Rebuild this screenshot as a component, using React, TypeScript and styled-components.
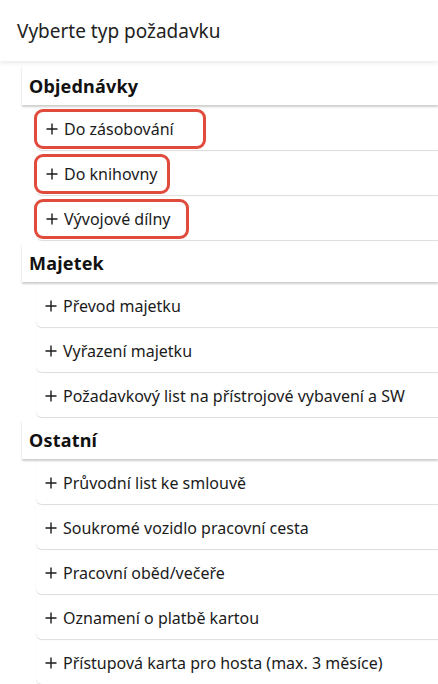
import React from "react";
import styled, { createGlobalStyle } from "styled-components";

const GlobalStyle = createGlobalStyle`
  html, body {
    margin: 0;
    padding: 0;
    background: #ffffff;
  }
  body {
    font-family: "Noto Sans", "Open Sans", Arial, sans-serif;
    color: #1b1b1b;
    overflow: hidden;
  }
`;

const Page = styled.div`
  width: 438px;
  height: 684px;
  overflow: hidden;
  background: #ffffff;
`;

const TopBar = styled.header`
  height: 61px;
  display: flex;
  align-items: center;
  padding-left: 17px;
  font-size: 19px;
  color: #222;
  box-shadow: 0 2px 5px rgba(0, 0, 0, 0.09);
  position: relative;
  z-index: 2;
`;

const List = styled.div`
  display: flex;
  flex-direction: column;
`;

const Section = styled.section<{ first?: boolean }>`
  display: flex;
  flex-direction: column;
  padding-top: ${(p) => (p.first ? "5px" : "3px")};
`;

const SectionTitle = styled.div`
  margin-left: 22px;
  height: 39px;
  display: flex;
  align-items: center;
  padding-left: 7px;
  padding-top: 1px;
  box-sizing: border-box;
  font-size: 18px;
  letter-spacing: 0.2px;
  font-weight: 700;
  color: #111;
  background: #fff;
  box-shadow: 0 2px 2px rgba(0, 0, 0, 0.2);
  position: relative;
  z-index: 1;
`;

const Row = styled.div`
  margin-left: 36px;
  height: 45px;
  box-sizing: border-box;
  display: flex;
  align-items: center;
  padding-top: 2px;
  border-radius: 0 0 0 6px;
  box-shadow: 0 1px 1px rgba(0, 0, 0, 0.14);
`;

const Label = styled.span<{ marked?: boolean; extra?: number }>`
  display: inline-flex;
  align-items: center;
  gap: 6px;
  font-size: 16px;
  color: #1b1b1b;
  white-space: nowrap;
  padding: ${(p) => (p.marked ? "6px" : "5px")}
    ${(p) => (p.marked ? 8 + (p.extra || 0) : 10)}px
    ${(p) => (p.marked ? "6px" : "5px")} 9px;
  margin-left: ${(p) => (p.marked ? "-2px" : "0")};
  border: ${(p) => (p.marked ? "3px solid #e14b3b" : "none")};
  border-radius: 9px;
`;

const Plus = () => (
  <svg width="12" height="12" viewBox="0 0 12 12" fill="none">
    <path d="M6 0.5v11M0.5 6h11" stroke="#1b1b1b" strokeWidth="1.4" />
  </svg>
);

type Item = { text: string; marked?: boolean; extra?: number };

const sections: { title: string; items: Item[] }[] = [
  {
    title: "Objednávky",
    items: [
      { text: "Do zásobování", marked: true, extra: 21 },
      { text: "Do knihovny", marked: true, extra: 1 },
      { text: "Vývojové dílny", marked: true, extra: 7 },
    ],
  },
  {
    title: "Majetek",
    items: [
      { text: "Převod majetku" },
      { text: "Vyřazení majetku" },
      { text: "Požadavkový list na přístrojové vybavení a SW" },
    ],
  },
  {
    title: "Ostatní",
    items: [
      { text: "Průvodní list ke smlouvě" },
      { text: "Soukromé vozidlo pracovní cesta" },
      { text: "Pracovní oběd/večeře" },
      { text: "Oznamení o platbě kartou" },
      { text: "Přístupová karta pro hosta (max. 3 měsíce)" },
    ],
  },
];

export default function App() {
  return (
    <Page>
      <GlobalStyle />
      <TopBar>Vyberte typ požadavku</TopBar>
      <List>
        {sections.map((s, i) => (
          <Section key={s.title} first={i === 0}>
            <SectionTitle>{s.title}</SectionTitle>
            {s.items.map((it) => (
              <Row key={it.text}>
                <Label marked={it.marked} extra={it.extra}>
                  <Plus />
                  {it.text}
                </Label>
              </Row>
            ))}
          </Section>
        ))}
      </List>
    </Page>
  );
}
